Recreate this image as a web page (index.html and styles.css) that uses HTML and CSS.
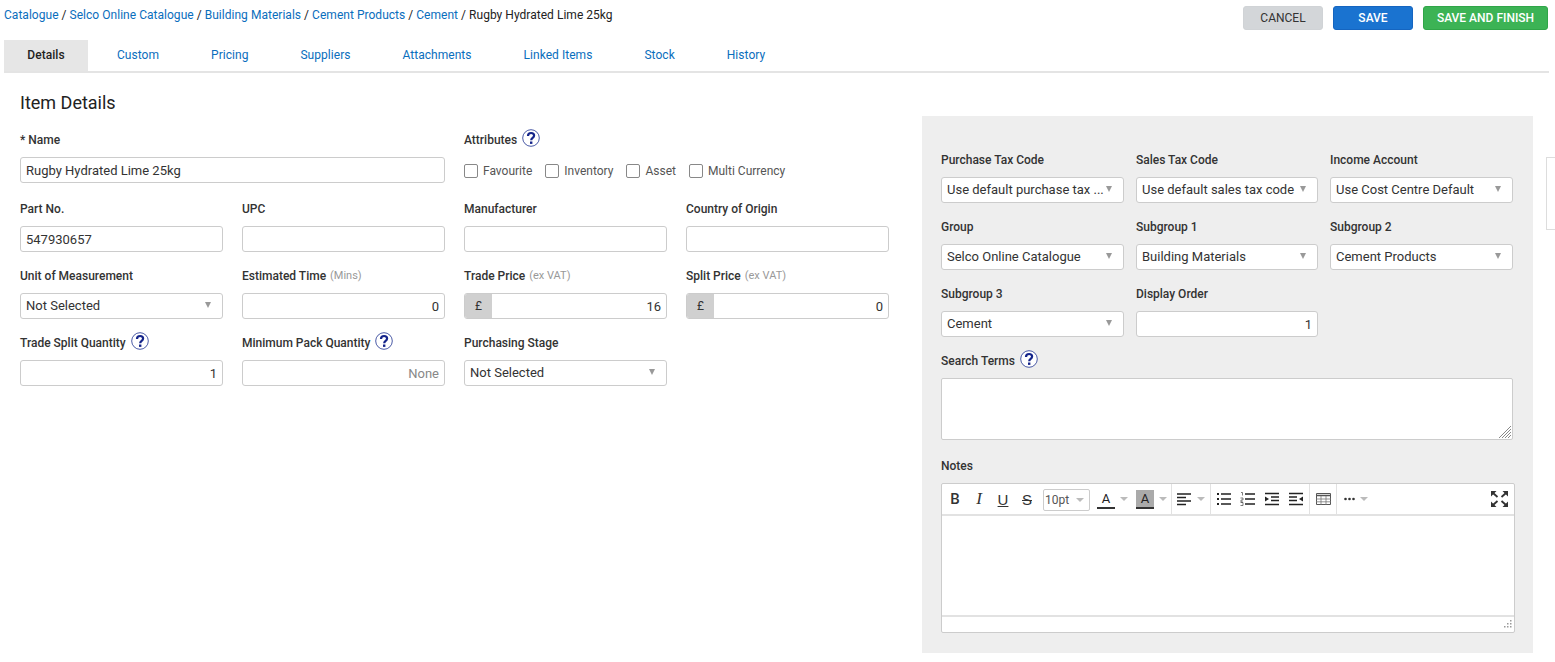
FILE: index.html
```html
<!DOCTYPE html>
<html lang="en">

<head>
    <meta charset="UTF-8">
    <title>Item Details</title>
    <link rel="stylesheet" href="styles.css">
</head>

<body>
    <svg class="svg-defs" width="0" height="0">
        <symbol id="help" viewBox="0 0 18 18">
            <circle cx="9" cy="9" r="8.300" fill="#fff" stroke="#4a5aa6" stroke-width="1"></circle>
            <path d="M6 7c0-1.900 1.300-3 3.100-3s3 1 3 2.600c0 2.300-2.900 2.300-2.900 4.600" fill="none" stroke="#14248a" stroke-width="2.200"></path>
            <rect x="8" y="12.500" width="2.400" height="2.400" fill="#14248a"></rect>
        </symbol>
    </svg>

    <div class="top-bar">
        <div class="breadcrumbs">
            <a href="#">Catalogue</a> / <a href="#">Selco Online Catalogue</a> / <a href="#">Building Materials</a> / <a href="#">Cement Products</a> / <a href="#">Cement</a> / Rugby Hydrated Lime 25kg
        </div>
        <div class="actions">
            <button class="btn btn-cancel">CANCEL</button>
            <button class="btn btn-save">SAVE</button>
            <button class="btn btn-finish">SAVE AND FINISH</button>
        </div>
    </div>

    <ul class="tabs">
        <li class="tab active">Details</li>
        <li class="tab">Custom</li>
        <li class="tab">Pricing</li>
        <li class="tab">Suppliers</li>
        <li class="tab">Attachments</li>
        <li class="tab">Linked Items</li>
        <li class="tab">Stock</li>
        <li class="tab">History</li>
    </ul>

    <div class="content">
        <div class="main-col">
            <h2 class="page-title">Item Details</h2>
            <div class="form-grid">
                <div class="field span-2">
                    <label>* Name</label>
                    <div class="input">Rugby Hydrated Lime 25kg</div>
                </div>
                <div class="field span-2">
                    <label>Attributes <svg class="help"><use href="#help"></use></svg></label>
                    <div class="checks">
                        <span class="check"><i></i>Favourite</span>
                        <span class="check"><i></i>Inventory</span>
                        <span class="check"><i></i>Asset</span>
                        <span class="check"><i></i>Multi Currency</span>
                    </div>
                </div>

                <div class="field"><label>Part No.</label><div class="input">547930657</div></div>
                <div class="field"><label>UPC</label><div class="input"></div></div>
                <div class="field"><label>Manufacturer</label><div class="input"></div></div>
                <div class="field"><label>Country of Origin</label><div class="input"></div></div>

                <div class="field"><label>Unit of Measurement</label><div class="input select">Not Selected</div></div>
                <div class="field"><label>Estimated Time <small>(Mins)</small></label><div class="input num">0</div></div>
                <div class="field">
                    <label>Trade Price <small>(ex VAT)</small></label>
                    <div class="input num money"><span class="addon">£</span>16</div>
                </div>
                <div class="field">
                    <label>Split Price <small>(ex VAT)</small></label>
                    <div class="input num money"><span class="addon">£</span>0</div>
                </div>

                <div class="field">
                    <label>Trade Split Quantity <svg class="help"><use href="#help"></use></svg></label>
                    <div class="input num">1</div>
                </div>
                <div class="field">
                    <label>Minimum Pack Quantity <svg class="help"><use href="#help"></use></svg></label>
                    <div class="input num placeholder">None</div>
                </div>
                <div class="field"><label>Purchasing Stage</label><div class="input select">Not Selected</div></div>
            </div>
        </div>

        <div class="side-panel">
            <div class="side-grid">
                <div class="field"><label>Purchase Tax Code</label><div class="input select">Use default purchase tax ...</div></div>
                <div class="field"><label>Sales Tax Code</label><div class="input select">Use default sales tax code</div></div>
                <div class="field"><label>Income Account</label><div class="input select">Use Cost Centre Default</div></div>

                <div class="field"><label>Group</label><div class="input select">Selco Online Catalogue</div></div>
                <div class="field"><label>Subgroup 1</label><div class="input select">Building Materials</div></div>
                <div class="field"><label>Subgroup 2</label><div class="input select">Cement Products</div></div>

                <div class="field"><label>Subgroup 3</label><div class="input select">Cement</div></div>
                <div class="field"><label>Display Order</label><div class="input num">1</div></div>
            </div>

            <div class="field search-terms">
                <label>Search Terms <svg class="help"><use href="#help"></use></svg></label>
                <div class="textarea">
                    <svg class="grip" width="14" height="14" viewBox="0 0 14 14">
                        <path d="M13 1 1 13M13 4 4 13M13 7 7 13M13 10 10 13" stroke="#888" stroke-width="1"></path>
                    </svg>
                </div>
            </div>

            <div class="field notes">
                <label>Notes</label>
                <div class="editor">
                    <div class="toolbar">
                        <div class="tool-group group-format">
                            <span class="tool fmt fmt-b">B</span>
                            <span class="tool fmt fmt-i">I</span>
                            <span class="tool fmt fmt-u">U</span>
                            <span class="tool fmt fmt-s">S</span>
                            <span class="size-select">10pt<b class="caret"></b></span>
                            <span class="tool color"><span class="color-a">A</span><b class="caret"></b></span>
                            <span class="tool color color-last"><span class="color-a color-bg">A</span><b class="caret"></b></span>
                        </div>
                        <div class="tool-group group-align">
                            <span class="tool">
                                <svg width="16" height="14" viewBox="0 0 16 14"><path d="M1 2h14M1 5.500h9M1 9h14M1 12.500h9" stroke="#222" stroke-width="1.500"></path></svg>
                                <b class="caret"></b>
                            </span>
                        </div>
                        <div class="tool-group group-icons">
                            <span class="tool icon">
                                <svg width="16" height="14" viewBox="0 0 16 14"><path d="M5 2h10M5 7h10M5 12h10" stroke="#222" stroke-width="1.400"></path><path d="M1 1h2v2H1zM1 6h2v2H1zM1 11h2v2H1z" fill="#222"></path></svg>
                            </span>
                            <span class="tool icon">
                                <svg width="16" height="14" viewBox="0 0 16 14"><path d="M5 2h10M5 7h10M5 12h10" stroke="#222" stroke-width="1.400"></path><path d="M1 .5h1.500v3M.5 6h2.500v2H1v2h2M.5 10.500h2.500v3H.500" fill="none" stroke="#444" stroke-width=".7"></path></svg>
                            </span>
                            <span class="tool icon">
                                <svg width="16" height="14" viewBox="0 0 16 14"><path d="M1 1.500h14M7 5h8M7 8.500h8M1 12.500h14" stroke="#222" stroke-width="1.400"></path><path d="M1 4.500 5 7 1 9.500z" fill="#222"></path></svg>
                            </span>
                            <span class="tool icon">
                                <svg width="16" height="14" viewBox="0 0 16 14"><path d="M1 1.500h14M1 5h8M1 8.500h8M1 12.500h14" stroke="#222" stroke-width="1.400"></path><path d="M15 4.500 11 7l4 2.500z" fill="#222"></path></svg>
                            </span>
                        </div>
                        <div class="tool-group group-icons">
                            <span class="tool icon">
                                <svg width="15" height="12" viewBox="0 0 15 12"><path d="M.5.500h14v11H.500z" fill="none" stroke="#555"></path><path d="M0 2.500h15" stroke="#555" stroke-width="1.500"></path><path d="M0 6h15M0 8.800h15M5 3v9M10 3v9" stroke="#777" stroke-width=".8"></path></svg>
                            </span>
                        </div>
                        <div class="tool-group no-border">
                            <span class="tool">
                                <svg class="dots" width="11" height="4" viewBox="0 0 11 4"><circle cx="1.500" cy="2" r="1.300" fill="#333"></circle><circle cx="5.500" cy="2" r="1.300" fill="#333"></circle><circle cx="9.500" cy="2" r="1.300" fill="#333"></circle></svg>
                                <b class="caret"></b>
                            </span>
                        </div>
                        <svg class="fullscreen" width="17" height="16" viewBox="0 0 17 16">
                            <path d="M0 0h5.500L0 5.500zM17 0h-5.500L17 5.500zM0 16h5.500L0 10.500zM17 16h-5.500l5.500-5.500z" fill="#333"></path>
                            <path d="M2 2l4.500 4M15 2l-4.500 4M2 14l4.500-4M15 14l-4.500-4" stroke="#333" stroke-width="1.800"></path>
                        </svg>
                    </div>
                    <div class="editor-body"></div>
                    <div class="statusbar">
                        <svg class="grip" width="10" height="10" viewBox="0 0 10 10">
                            <path d="M8 0h1.500v1.500H8zM5 3h1.500v1.500H5zM8 3h1.500v1.500H8zM2 6h1.500v1.500H2zM5 6h1.500v1.500H5zM8 6h1.500v1.500H8z" fill="#999"></path>
                        </svg>
                    </div>
                </div>
            </div>
        </div>

        <div class="edge-tab"></div>
    </div>
</body>

</html>
```

FILE: styles.css
```css
* {
    box-sizing: border-box;
}

html,
body {
    height: 100%;
}

body {
    font-family: Roboto, "Liberation Sans", sans-serif;
    font-size: 13px;
    color: #222;
    margin: 0;
    padding: 0;
    background-color: #fff;
    overflow: hidden;
}

a {
    color: #0a6ebd;
    text-decoration: none;
}

.svg-defs {
    position: absolute;
}

.top-bar {
    display: flex;
    justify-content: space-between;
    align-items: flex-start;
    height: 40px;
    padding: 6px 7px 0 4px;
}

.breadcrumbs {
    font-size: 12px;
    line-height: 18px;
    letter-spacing: .03px;
}

.actions {
    display: flex;
    gap: 10px;
}

.btn {
    height: 24px;
    padding: 0 0 1px;
    font-family: Roboto, "Liberation Sans", sans-serif;
    font-size: 12px;
    border-radius: 3px;
    border: 1px solid transparent;
    cursor: pointer;
}

.btn-cancel {
    width: 80px;
    background-color: #d3d6d9;
    border-color: #d0d3d6;
    color: #333;
}

.btn-save {
    width: 80px;
    background-color: #1a73d0;
    border-color: #1565c0;
    color: #fff;
    font-weight: 500;
}

.btn-finish {
    width: 125px;
    background-color: #3cb355;
    border-color: #30a548;
    color: #fff;
    font-weight: 500;
}

.tabs {
    display: flex;
    list-style: none;
    height: 33px;
    margin: 0 6px 0 4px;
    padding: 0;
    border-bottom: 2px solid #e4e4e4;
}

.tab {
    height: 31px;
    padding: 0 26px;
    line-height: 30px;
    letter-spacing: .04px;
    color: #0a6ebd;
    font-size: 12px;
}

.tab.active {
    width: 84px;
    margin-right: 3px;
    padding: 0;
    text-align: center;
    background-color: #e6e6e6;
    color: #222;
    font-weight: 500;
}

.content {
    display: flex;
    align-items: flex-start;
    position: relative;
}

.main-col {
    width: 922px;
    padding: 19px 33px 0 20px;
}

.page-title {
    margin: 0 0 17px;
    font-size: 18px;
    font-weight: 400;
    line-height: 22px;
    color: #222;
}

.form-grid {
    display: grid;
    grid-template-columns: repeat(4, 203px);
    column-gap: 19px;
    row-gap: 15px;
}

.span-2 {
    grid-column: span 2;
    margin-bottom: 2px;
}

.field label {
    display: flex;
    align-items: center;
    gap: 4px;
    height: 17px;
    margin-bottom: 9px;
    font-size: 12px;
    font-weight: 500;
    color: #333;
    white-space: nowrap;
}

.field label small {
    font-size: 11px;
    font-weight: 400;
    color: #999;
}

.help {
    width: 18px;
    height: 18px;
    margin-left: 1px;
    margin-top: -3px;
}

.input {
    display: flex;
    align-items: center;
    position: relative;
    height: 26px;
    padding: 0 5px;
    background-color: #fff;
    border: 1px solid #ccc;
    border-radius: 3px;
    font-size: 13px;
    color: #333;
    white-space: nowrap;
}

.select {
    padding-right: 20px;
    padding-bottom: 2px;
}

.select::after {
    content: "";
    position: absolute;
    right: 11px;
    top: 8px;
    border-left: 3.500px solid transparent;
    border-right: 3.500px solid transparent;
    border-top: 6px solid #999;
}

.num {
    justify-content: flex-end;
}

.placeholder {
    color: #888;
}

.money {
    padding-left: 28px;
}

.addon {
    position: absolute;
    left: 0;
    top: 0;
    bottom: 0;
    width: 27px;
    display: flex;
    align-items: center;
    justify-content: center;
    background-color: #d0d0d0;
    border-radius: 2px 0 0 2px;
    font-size: 12px;
}

.checks {
    display: flex;
    align-items: center;
    height: 26px;
    padding-top: 2px;
    gap: 13px;
}

.check {
    display: flex;
    align-items: center;
    gap: 5px;
    font-size: 12px;
    color: #555;
}

.check i {
    width: 14px;
    height: 14px;
    border: 1px solid #888;
    border-radius: 2px;
    background-color: #fff;
}

.side-panel {
    width: 611px;
    height: 537px;
    margin-top: 43px;
    padding: 35px 19px 0;
    background-color: #eee;
}

.side-grid {
    display: grid;
    grid-template-columns: 183px 182px 183px;
    column-gap: 12px;
    row-gap: 15px;
}

.search-terms {
    margin-top: 15px;
}

.textarea {
    position: relative;
    width: 572px;
    height: 62px;
    background-color: #fff;
    border: 1px solid #ccc;
    border-radius: 2px;
}

.textarea .grip {
    position: absolute;
    right: 0;
    bottom: 0;
}

.notes {
    margin-top: 17px;
}

.editor {
    width: 574px;
    height: 150px;
    display: flex;
    flex-direction: column;
    background-color: #fff;
    border: 1px solid #ccc;
    border-radius: 2px;
}

.toolbar {
    display: flex;
    align-items: stretch;
    height: 32px;
    border-bottom: 2px solid #e2e2e2;
    position: relative;
}

.tool-group {
    display: flex;
    align-items: center;
    flex-shrink: 0;
    border-right: 1px solid #e2e2e2;
}

.group-format {
    width: 230px;
    padding-left: 1px;
}

.group-align {
    width: 39px;
    padding-left: 4px;
}

.group-icons {
    padding: 0 1px;
}

.no-border {
    padding-left: 7px;
    border-right: 0;
}

.tool {
    display: flex;
    align-items: center;
    justify-content: center;
    gap: 5px;
    height: 100%;
    color: #222;
}

.icon {
    width: 24px;
}

.fmt {
    width: 24px;
    flex-shrink: 0;
    font-size: 15px;
    font-family: "Liberation Sans", sans-serif;
    color: #333;
}

.fmt-b {
    font-family: Roboto, sans-serif;
    font-weight: 500;
}

.fmt-i {
    font-family: "Liberation Serif", serif;
    font-size: 17px;
    font-style: italic;
}

.fmt-u {
    text-decoration: underline;
}

.fmt-s {
    text-decoration: line-through;
}

.size-select {
    display: flex;
    align-items: center;
    justify-content: space-between;
    flex-shrink: 0;
    width: 47px;
    height: 22px;
    margin: 1px 7px 0 4px;
    padding: 0 5px 0 1px;
    border: 1px solid #ccc;
    border-radius: 2px;
    font-size: 12px;
    color: #555;
}

.color {
    width: 39px;
    flex-shrink: 0;
    justify-content: flex-start;
}

.color-last {
    width: 36px;
}

.color-a {
    display: block;
    width: 18px;
    height: 19px;
    border-bottom: 2px solid #333;
    font-size: 13px;
    line-height: 17px;
    text-align: center;
}

.color-bg {
    background-color: #aaa;
}

.caret {
    display: block;
    border-left: 4px solid transparent;
    border-right: 4px solid transparent;
    border-top: 4px solid #bbb;
}

.fullscreen {
    position: absolute;
    right: 6px;
    top: 7px;
}

.editor-body {
    flex: 1;
}

.statusbar {
    position: relative;
    height: 17px;
    border-top: 2px solid #e2e2e2;
}

.statusbar .grip {
    position: absolute;
    right: 2px;
    bottom: 2px;
}

.edge-tab {
    position: absolute;
    right: -2px;
    top: 84px;
    width: 11px;
    height: 73px;
    background-color: #fff;
    border: 1px solid #ddd;
}
```
